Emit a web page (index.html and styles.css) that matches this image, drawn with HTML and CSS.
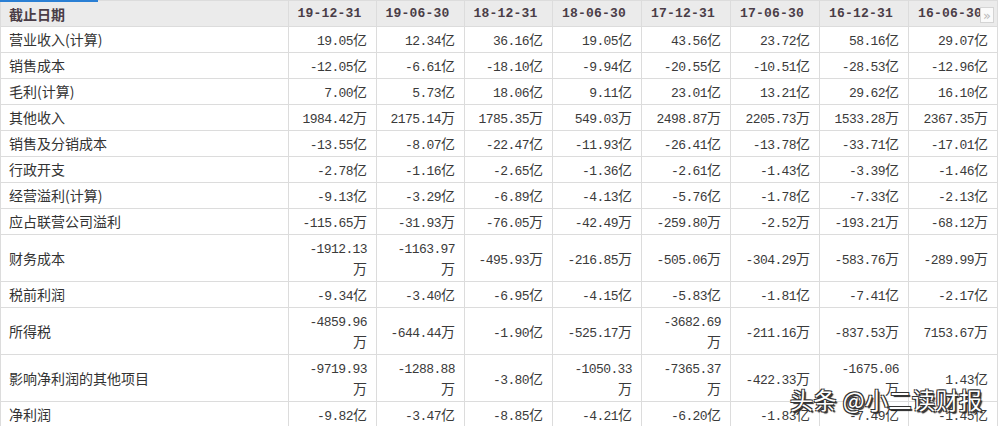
FILE: index.html
```html
<!DOCTYPE html>
<html lang="zh-CN">
<head>
<meta charset="utf-8">
<title>财务数据</title>
<link rel="stylesheet" href="styles.css">
</head>
<body>
<div class="wrap">
  <table class="fin">
    <colgroup>
      <col class="c-label"><col class="c88"><col class="c88"><col class="c88"><col class="c89"><col class="c89"><col class="c89"><col class="c89"><col class="c89">
    </colgroup>
    <thead>
      <tr>
        <th class="lbl">截止日期</th>
        <th>19-12-31</th><th>19-06-30</th><th>18-12-31</th><th>18-06-30</th><th>17-12-31</th><th>17-06-30</th><th>16-12-31</th><th>16-06-30</th>
      </tr>
    </thead>
    <tbody>
      <tr><td class="lbl">营业收入(计算)</td><td><span class="n">19.05</span><span class="u">亿</span></td><td><span class="n">12.34</span><span class="u">亿</span></td><td><span class="n">36.16</span><span class="u">亿</span></td><td><span class="n">19.05</span><span class="u">亿</span></td><td><span class="n">43.56</span><span class="u">亿</span></td><td><span class="n">23.72</span><span class="u">亿</span></td><td><span class="n">58.16</span><span class="u">亿</span></td><td><span class="n">29.07</span><span class="u">亿</span></td></tr>
      <tr><td class="lbl">销售成本</td><td><span class="n">-12.05</span><span class="u">亿</span></td><td><span class="n">-6.61</span><span class="u">亿</span></td><td><span class="n">-18.10</span><span class="u">亿</span></td><td><span class="n">-9.94</span><span class="u">亿</span></td><td><span class="n">-20.55</span><span class="u">亿</span></td><td><span class="n">-10.51</span><span class="u">亿</span></td><td><span class="n">-28.53</span><span class="u">亿</span></td><td><span class="n">-12.96</span><span class="u">亿</span></td></tr>
      <tr><td class="lbl">毛利(计算)</td><td><span class="n">7.00</span><span class="u">亿</span></td><td><span class="n">5.73</span><span class="u">亿</span></td><td><span class="n">18.06</span><span class="u">亿</span></td><td><span class="n">9.11</span><span class="u">亿</span></td><td><span class="n">23.01</span><span class="u">亿</span></td><td><span class="n">13.21</span><span class="u">亿</span></td><td><span class="n">29.62</span><span class="u">亿</span></td><td><span class="n">16.10</span><span class="u">亿</span></td></tr>
      <tr><td class="lbl">其他收入</td><td><span class="n">1984.42</span><span class="u">万</span></td><td><span class="n">2175.14</span><span class="u">万</span></td><td><span class="n">1785.35</span><span class="u">万</span></td><td><span class="n">549.03</span><span class="u">万</span></td><td><span class="n">2498.87</span><span class="u">万</span></td><td><span class="n">2205.73</span><span class="u">万</span></td><td><span class="n">1533.28</span><span class="u">万</span></td><td><span class="n">2367.35</span><span class="u">万</span></td></tr>
      <tr><td class="lbl">销售及分销成本</td><td><span class="n">-13.55</span><span class="u">亿</span></td><td><span class="n">-8.07</span><span class="u">亿</span></td><td><span class="n">-22.47</span><span class="u">亿</span></td><td><span class="n">-11.93</span><span class="u">亿</span></td><td><span class="n">-26.41</span><span class="u">亿</span></td><td><span class="n">-13.78</span><span class="u">亿</span></td><td><span class="n">-33.71</span><span class="u">亿</span></td><td><span class="n">-17.01</span><span class="u">亿</span></td></tr>
      <tr><td class="lbl">行政开支</td><td><span class="n">-2.78</span><span class="u">亿</span></td><td><span class="n">-1.16</span><span class="u">亿</span></td><td><span class="n">-2.65</span><span class="u">亿</span></td><td><span class="n">-1.36</span><span class="u">亿</span></td><td><span class="n">-2.61</span><span class="u">亿</span></td><td><span class="n">-1.43</span><span class="u">亿</span></td><td><span class="n">-3.39</span><span class="u">亿</span></td><td><span class="n">-1.46</span><span class="u">亿</span></td></tr>
      <tr><td class="lbl">经营溢利(计算)</td><td><span class="n">-9.13</span><span class="u">亿</span></td><td><span class="n">-3.29</span><span class="u">亿</span></td><td><span class="n">-6.89</span><span class="u">亿</span></td><td><span class="n">-4.13</span><span class="u">亿</span></td><td><span class="n">-5.76</span><span class="u">亿</span></td><td><span class="n">-1.78</span><span class="u">亿</span></td><td><span class="n">-7.33</span><span class="u">亿</span></td><td><span class="n">-2.13</span><span class="u">亿</span></td></tr>
      <tr><td class="lbl">应占联营公司溢利</td><td><span class="n">-115.65</span><span class="u">万</span></td><td><span class="n">-31.93</span><span class="u">万</span></td><td><span class="n">-76.05</span><span class="u">万</span></td><td><span class="n">-42.49</span><span class="u">万</span></td><td><span class="n">-259.80</span><span class="u">万</span></td><td><span class="n">-2.52</span><span class="u">万</span></td><td><span class="n">-193.21</span><span class="u">万</span></td><td><span class="n">-68.12</span><span class="u">万</span></td></tr>
      <tr><td class="lbl">财务成本</td><td><span class="n">-1912.13</span><span class="u">万</span></td><td><span class="n">-1163.97</span><span class="u">万</span></td><td><span class="n">-495.93</span><span class="u">万</span></td><td><span class="n">-216.85</span><span class="u">万</span></td><td><span class="n">-505.06</span><span class="u">万</span></td><td><span class="n">-304.29</span><span class="u">万</span></td><td><span class="n">-583.76</span><span class="u">万</span></td><td><span class="n">-289.99</span><span class="u">万</span></td></tr>
      <tr><td class="lbl">税前利润</td><td><span class="n">-9.34</span><span class="u">亿</span></td><td><span class="n">-3.40</span><span class="u">亿</span></td><td><span class="n">-6.95</span><span class="u">亿</span></td><td><span class="n">-4.15</span><span class="u">亿</span></td><td><span class="n">-5.83</span><span class="u">亿</span></td><td><span class="n">-1.81</span><span class="u">亿</span></td><td><span class="n">-7.41</span><span class="u">亿</span></td><td><span class="n">-2.17</span><span class="u">亿</span></td></tr>
      <tr><td class="lbl">所得税</td><td><span class="n">-4859.96</span><span class="u">万</span></td><td><span class="n">-644.44</span><span class="u">万</span></td><td><span class="n">-1.90</span><span class="u">亿</span></td><td><span class="n">-525.17</span><span class="u">万</span></td><td><span class="n">-3682.69</span><span class="u">万</span></td><td><span class="n">-211.16</span><span class="u">万</span></td><td><span class="n">-837.53</span><span class="u">万</span></td><td><span class="n">7153.67</span><span class="u">万</span></td></tr>
      <tr><td class="lbl">影响净利润的其他项目</td><td><span class="n">-9719.93</span><span class="u">万</span></td><td><span class="n">-1288.88</span><span class="u">万</span></td><td><span class="n">-3.80</span><span class="u">亿</span></td><td><span class="n">-1050.33</span><span class="u">万</span></td><td><span class="n">-7365.37</span><span class="u">万</span></td><td><span class="n">-422.33</span><span class="u">万</span></td><td><span class="n">-1675.06</span><span class="u">万</span></td><td><span class="n">1.43</span><span class="u">亿</span></td></tr>
      <tr><td class="lbl">净利润</td><td><span class="n">-9.82</span><span class="u">亿</span></td><td><span class="n">-3.47</span><span class="u">亿</span></td><td><span class="n">-8.85</span><span class="u">亿</span></td><td><span class="n">-4.21</span><span class="u">亿</span></td><td><span class="n">-6.20</span><span class="u">亿</span></td><td><span class="n">-1.83</span><span class="u">亿</span></td><td><span class="n">-7.49</span><span class="u">亿</span></td><td><span class="n">-1.45</span><span class="u">亿</span></td></tr>
    </tbody>
  </table>
  <button class="more" type="button">»</button>
  <div class="mark">头条 @小二读财报</div>
</div>
</body>
</html>
```

FILE: styles.css
```css
html, body {
  margin: 0;
  padding: 0;
  background: #ffffff;
  overflow: hidden;
}

.wrap {
  position: relative;
  width: 999px;
  height: 426px;
  overflow: hidden;
}

.wrap::before {
  content: "";
  position: absolute;
  left: 0;
  top: 0;
  width: 98px;
  height: 2px;
  background: #2a7fd4;
  z-index: 2;
}

.fin {
  border-collapse: collapse;
  table-layout: fixed;
  width: 998px;
  font-family: "Noto Sans CJK SC", sans-serif;
  font-size: 14px;
  color: #333333;
}

.c-label { width: 288px; }
.c88 { width: 88px; }
.c89 { width: 89px; }

.fin th,
.fin td {
  border: 1px solid #dcdcdc;
}

.fin th {
  background: #ebebeb;
  color: #4a3d47;
  font-family: "Liberation Mono", monospace;
  font-weight: bold;
  font-size: 13px;
  letter-spacing: 0.2px;
  line-height: 21px;
  height: 21px;
  padding: 2px 6px 2px 0;
  text-align: center;
  white-space: nowrap;
  overflow: hidden;
}

.fin th.lbl {
  font-family: "Noto Sans CJK SC", sans-serif;
  font-size: 14px;
  line-height: 14px;
  letter-spacing: 0;
  text-align: left;
  padding-left: 8px;
}

.fin td {
  line-height: 21px;
  padding: 2px 9px 2px 8px;
  text-align: right;
  vertical-align: middle;
}

.fin td.lbl {
  text-align: left;
  padding-left: 8px;
}

.n {
  font-family: "Liberation Mono", monospace;
  font-size: 13px;
  line-height: 13px;
  letter-spacing: -0.6px;
  color: #3a3a3a;
}

.u {
  font-family: "Noto Sans CJK SC", sans-serif;
  font-size: 14px;
  line-height: 14px;
  color: #3a3a3a;
}

.more {
  position: absolute;
  left: 980px;
  top: 7px;
  width: 14px;
  height: 16px;
  padding: 0;
  border: 1px solid #d4d4d4;
  background: #fafafa;
  color: #b8b8b8;
  font-family: "DejaVu Sans", sans-serif;
  font-size: 13px;
  line-height: 13px;
  text-align: center;
}

.mark {
  position: absolute;
  left: 790px;
  top: 384px;
  font-family: "Noto Sans CJK SC", sans-serif;
  font-size: 23px;
  line-height: 30px;
  color: #ffffff;
  letter-spacing: 0.5px;
  white-space: nowrap;
  text-shadow: 1px 1px 0 #333, -1px 1px 0 #333, 1px -1px 0 #333, -1px -1px 0 #333, 2px 2px 1px #222;
}
```
